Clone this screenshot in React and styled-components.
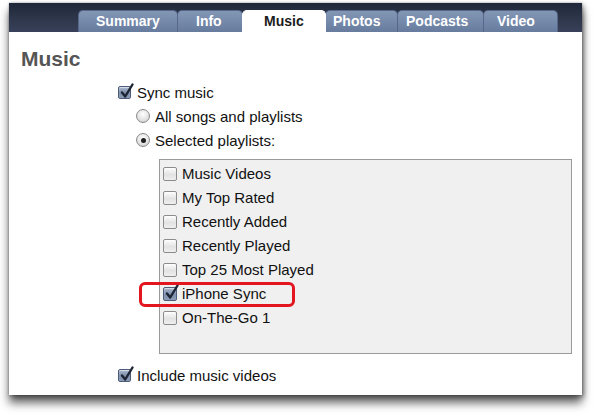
import React from 'react'
import styled, { createGlobalStyle } from 'styled-components'

const GlobalStyle = createGlobalStyle`
  html, body {
    margin: 0;
    padding: 0;
    background: #ffffff;
  }
  body {
    font-family: "Liberation Sans", Arial, sans-serif;
  }
`;

const Page = styled.div`
  width: 594px;
  height: 415px;
  padding: 3px 0 0 9px;
  box-sizing: border-box;
  overflow: hidden;
`;

const Window = styled.div`
  width: 573px;
  height: 392px;
  background: #ffffff;
  display: flex;
  flex-direction: column;
  box-shadow: 0 8px 9px rgba(0, 0, 0, 0.6), 2px 2px 5px rgba(0, 0, 0, 0.35), 0 0 2px rgba(0, 0, 0, 0.3);
`;

const TabBar = styled.div`
  height: 29px;
  flex: none;
  display: flex;
  align-items: flex-end;
  padding-left: 69px;
  background: linear-gradient(#20273a, #2f384c 60%, #38415a);
`;

const Tab = styled.div`
  box-sizing: border-box;
  width: ${p => p.$w}px;
  height: 22px;
  padding-left: ${p => p.$pl}px;
  margin-right: -1px;
  border-radius: 5px 5px 0 0;
  border: 1px solid ${p => (p.$active ? '#ffffff' : '#56678a')};
  border-bottom: none;
  background: ${p => (p.$active
    ? '#ffffff'
    : 'linear-gradient(#8396b5, #7589aa 50%, #677b9e)')};
  color: ${p => (p.$active ? '#1c1c1c' : '#ffffff')};
  font-weight: bold;
  font-size: 14px;
  line-height: 21px;
  white-space: nowrap;
  position: relative;
  z-index: ${p => (p.$active ? 2 : 1)};
`;

const Content = styled.div`
  padding: 15px 0 0 12px;
`;

const Heading = styled.h1`
  margin: 0;
  font-size: 21px;
  line-height: 24px;
  font-weight: bold;
  color: #555555;
`;

const Options = styled.div`
  margin-top: 9px;
  padding-left: 97px;
`;

const Row = styled.div`
  display: flex;
  align-items: center;
  height: 24px;
  padding-left: ${p => p.$indent || 0}px;
  font-size: 15px;
  color: #111111;
  white-space: nowrap;
  position: relative;
`;

const Box = styled.span`
  box-sizing: border-box;
  flex: none;
  width: ${p => p.$size}px;
  height: ${p => p.$size}px;
  margin-right: ${p => p.$gap}px;
  margin-top: ${p => p.$dy || 0}px;
  border-radius: 2px;
  border: 1px solid ${p => (p.$checked ? '#4d5c78' : '#8c8c8c')};
  background: ${p => (p.$checked
    ? 'linear-gradient(#a9b6cc, #7d8eab 55%, #8d9cb6)'
    : 'linear-gradient(#fdfdfd, #e2e2e2 55%, #efefef)')};
  position: relative;
  box-shadow: inset 0 1px 1px rgba(255, 255, 255, 0.6);

  svg {
    position: absolute;
    left: 0;
    top: -4px;
    overflow: visible;
  }
`;

const Radio = styled.span`
  box-sizing: border-box;
  flex: none;
  width: 14px;
  height: 14px;
  margin-right: 5px;
  border-radius: 50%;
  border: 1px solid #8a8a8a;
  background: radial-gradient(circle at 50% 35%, #ffffff, #e4e4e4 55%, #c4c4c4);
  display: flex;
  align-items: center;
  justify-content: center;

  &::after {
    content: '';
    display: ${p => (p.$selected ? 'block' : 'none')};
    width: 5px;
    height: 5px;
    border-radius: 50%;
    background: #1e1e1e;
  }
`;

const ListBox = styled.div`
  box-sizing: border-box;
  width: 413px;
  height: 195px;
  margin: 7px 0 0 41px;
  padding-top: 1px;
  border: 1px solid #9a9a9a;
  background: #f0f0f0;
`;

const Highlight = styled.span`
  position: absolute;
  left: -21px;
  top: 1px;
  width: 156px;
  height: 25px;
  box-sizing: border-box;
  border: 3px solid #e3151f;
  border-radius: 6px;
  pointer-events: none;
`;

const Footer = styled.div`
  margin-top: 9px;
  padding-left: 97px;
`;

function Check({ checked, size = 14, gap = 5, dy }) {
  return (
    <Box $checked={checked} $size={size} $gap={gap} $dy={dy}>
      {checked && (
        <svg width="16" height="16" viewBox="0 0 16 16">
          <path
            d="M3 9.5 L6.2 13.5 L13.5 1.5"
            fill="none"
            stroke="#1d2433"
            strokeWidth="2.4"
            strokeLinecap="round"
            strokeLinejoin="round"
          />
        </svg>
      )}
    </Box>
  );
}

const tabs = [
  { label: 'Summary', w: 100, pl: 17 },
  { label: 'Info', w: 66, pl: 18 },
  { label: 'Music', w: 84, pl: 21, active: true },
  { label: 'Photos', w: 73, pl: 7 },
  { label: 'Podcasts', w: 87, pl: 8 },
  { label: 'Video', w: 75, pl: 13 },
];

const playlists = [
  { name: 'Music Videos' },
  { name: 'My Top Rated' },
  { name: 'Recently Added' },
  { name: 'Recently Played' },
  { name: 'Top 25 Most Played' },
  { name: 'iPhone Sync', checked: true, marked: true },
  { name: 'On-The-Go 1' },
];

export default function App() {
  return (
    <>
      <GlobalStyle />
      <Page>
        <Window>
          <TabBar>
            {tabs.map(t => (
              <Tab key={t.label} $w={t.w} $pl={t.pl} $active={t.active}>
                {t.label}
              </Tab>
            ))}
          </TabBar>
          <Content>
            <Heading>Music</Heading>
            <Options>
              <Row>
                <Check checked size={13} gap={6} />
                Sync music
              </Row>
              <Row $indent={18}>
                <Radio />
                All songs and playlists
              </Row>
              <Row $indent={18}>
                <Radio $selected />
                Selected playlists:
              </Row>
              <ListBox>
                {playlists.map(p => (
                  <Row key={p.name} $indent={3}>
                    <Check checked={p.checked} dy={2} />
                    {p.name}
                    {p.marked && <Highlight />}
                  </Row>
                ))}
              </ListBox>
            </Options>
            <Footer>
              <Row>
                <Check checked size={13} gap={6} />
                Include music videos
              </Row>
            </Footer>
          </Content>
        </Window>
      </Page>
    </>
  );
}
